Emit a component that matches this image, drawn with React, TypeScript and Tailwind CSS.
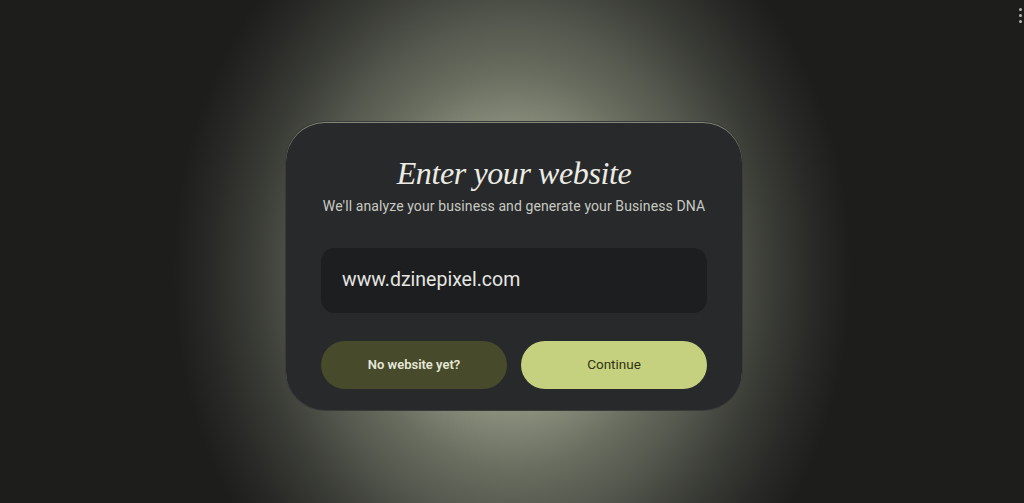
import React from 'react';

const glow =
  'bg-[radial-gradient(ellipse_340px_410px_at_50%_54%,#a0a490_0%,#8a8e7c_34%,#6a6e60_48%,#52564c_62%,#3a3c36_76%,#292a27_89%,#1d1e1c_100%)]';

export default function App() {
  return (
    <div className={`relative w-full h-[503px] overflow-hidden bg-[#1d1e1c] ${glow} flex items-center justify-center`}>
      {/* menu dots */}
      <div className="absolute top-[8px] right-[2px] flex flex-col gap-[3px]">
        <span className="w-[3px] h-[3px] rounded-full bg-[#b4b4b0]" />
        <span className="w-[3px] h-[3px] rounded-full bg-[#b4b4b0]" />
        <span className="w-[3px] h-[3px] rounded-full bg-[#b4b4b0]" />
      </div>

      <div className="mt-[28px] ml-[4px] w-[458px] h-[290px] rounded-[40px] bg-[#27292b] border border-[#6e7466]/25 shadow-[inset_0_1px_0_rgba(190,200,170,0.6)] px-[35px] pt-[31px] pb-[21px] flex flex-col">
        <h1 className="text-center text-[32px] leading-[40px] italic text-[#ecebe4] tracking-[-0.4px]" style={{ fontFamily: '"Liberation Serif", "DejaVu Serif", serif' }}>
          Enter your website
        </h1>
        <p className="mt-[3px] text-center text-[14px] leading-[20px] text-[#c9c9c2] tracking-[0.1px]" style={{ fontFamily: 'Roboto, "Liberation Sans", sans-serif' }}>
          We'll analyze your business and generate your Business DNA
        </p>

        <div className="mt-[32px] h-[66px] rounded-[14px] bg-[#1d1e20] flex items-center px-[21px]">
          <span className="text-[19.5px] text-[#e6e6e2]" style={{ fontFamily: 'Roboto, "Liberation Sans", sans-serif' }}>
            www.dzinepixel.com
          </span>
        </div>

        <div className="mt-[28px] flex gap-[14px]" style={{ fontFamily: 'Roboto, "Liberation Sans", sans-serif' }}>
          <button className="flex-1 h-[48px] rounded-full bg-[#474a2b] text-[13px] font-semibold text-[#e6e8d8]">
            No website yet?
          </button>
          <button className="flex-1 h-[48px] rounded-full bg-[#c6d17f] text-[13.5px] font-normal text-[#2f3412]">
            Continue
          </button>
        </div>
      </div>
    </div>
  );
}
